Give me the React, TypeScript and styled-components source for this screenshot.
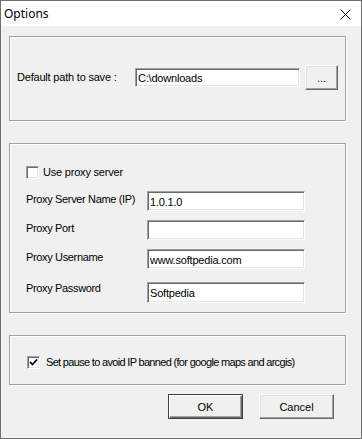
import React from "react";
import styled, { createGlobalStyle } from "styled-components";

const Global = createGlobalStyle`
  html, body { margin: 0; padding: 0; background: #f0f0f0; }
  * { box-sizing: border-box; }
`;

const Window = styled.div`
  width: 362px;
  height: 439px;
  border: 1px solid #707070;
  background: #f0f0f0;
  display: flex;
  flex-direction: column;
  font-family: "Liberation Sans", Arial, sans-serif;
  font-size: 11px;
  color: #000;
`;

const TitleBar = styled.div`
  height: 25px;
  background: #fff;
  display: flex;
  align-items: center;
  justify-content: space-between;
  padding: 0 10px 0 3px;
  flex-shrink: 0;
`;

const Title = styled.span`
  font-family: "Noto Sans", "Open Sans", sans-serif;
  font-size: 12px;
  color: #000;
  margin-top: -1px;
`;

const Close = styled.svg`
  width: 11px;
  height: 11px;
  margin-top: 2px;
`;

const Body = styled.div`
  flex: 1;
  display: flex;
  flex-direction: column;
  padding: 0 15px 0 8px;
`;

const Group = styled.div<{ $h: number; $top: number }>`
  height: ${(p) => p.$h}px;
  margin-top: ${(p) => p.$top}px;
  border: 1px solid #a0a0a0;
  box-shadow: inset 1px 1px 0 #fff, 1px 1px 0 #fff;
`;

const PathRow = styled.div`
  height: 100%;
  display: flex;
  align-items: center;
  padding: 0 0 2px 7px;
`;

const Label = styled.span<{ $w?: number; $pt?: number; $ls?: number }>`
  display: block;
  width: ${(p) => (p.$w ? `${p.$w}px` : "auto")};
  flex-shrink: 0;
  line-height: 13px;
  padding-top: ${(p) => p.$pt ?? 0}px;
  white-space: nowrap;
  letter-spacing: ${(p) => p.$ls ?? -0.2}px;
`;

const TextBox = styled.input<{ $w: number; $h: number }>`
  width: ${(p) => p.$w}px;
  height: ${(p) => p.$h}px;
  margin: 0;
  padding: 1px 2px 0;
  background: #fff;
  border: 1px solid;
  border-color: #a0a0a0 #fff #fff #a0a0a0;
  box-shadow: inset 1px 1px 0 #696969, inset -1px -1px 0 #e3e3e3;
  font-family: "Liberation Sans", Arial, sans-serif;
  font-size: 11px;
  letter-spacing: -0.2px;
  color: #000;
  outline: none;
`;

const Button = styled.button<{ $w: number; $h: number; $default?: boolean }>`
  width: ${(p) => p.$w}px;
  height: ${(p) => p.$h}px;
  margin: 0;
  padding: 0;
  background: #f0f0f0;
  border: 1px solid;
  border-color: ${(p) =>
    p.$default ? "#404040" : "#fff #696969 #696969 #fff"};
  box-shadow: ${(p) =>
    p.$default
      ? "inset 1px 1px 0 #fff, inset -1px -1px 0 #696969, inset -2px -2px 0 #a0a0a0"
      : "inset -1px -1px 0 #a0a0a0, inset 1px 1px 0 #e3e3e3"};
  font-family: "Liberation Sans", Arial, sans-serif;
  font-size: 11px;
  color: #000;
  display: flex;
  align-items: center;
  justify-content: center;
`;

const ProxyBody = styled.div`
  display: flex;
  flex-direction: column;
  padding: 22px 0 0 16px;
`;

const CheckRow = styled.div<{ $gap: number }>`
  display: flex;
  align-items: center;
  gap: ${(p) => p.$gap}px;
  height: 13px;
`;

const Box = styled.span`
  width: 13px;
  height: 13px;
  flex-shrink: 0;
  background: #fff;
  border: 1px solid;
  border-color: #a0a0a0 #fff #fff #a0a0a0;
  box-shadow: inset 1px 1px 0 #696969, inset -1px -1px 0 #e3e3e3;
  display: flex;
  align-items: center;
  justify-content: center;
`;

const Fields = styled.div`
  display: flex;
  flex-direction: column;
  gap: 9px;
  margin-top: 12px;
`;

const FieldRow = styled.div<{ $mt?: number }>`
  display: flex;
  align-items: flex-start;
  margin-top: ${(p) => p.$mt ?? 0}px;
`;

const PauseBody = styled.div`
  height: 100%;
  display: flex;
  align-items: center;
  padding: 5px 0 0 17px;
`;

const Buttons = styled.div`
  display: flex;
  justify-content: flex-end;
  gap: 16px;
  margin-top: 9px;
  padding-right: 12px;
`;

const Check = ({ checked }: { checked?: boolean }) => (
  <Box>
    {checked && (
      <svg width="9" height="9" viewBox="0 0 9 9">
        <path d="M1 4 L3.5 6.5 L8 1.5" stroke="#000" strokeWidth="1.8" fill="none" />
      </svg>
    )}
  </Box>
);

const fields: { label: string; value: string; mt?: number; pt?: number; h: number }[] = [
  { label: "Proxy Server Name (IP)", value: "1.0.1.0", pt: 2, h: 20 },
  { label: "Proxy Port", value: "", pt: 2, h: 20 },
  { label: "Proxy Username", value: "www.softpedia.com", pt: 2, h: 20 },
  { label: "Proxy Password", value: "Softpedia", mt: 4, pt: 0, h: 21 },
];

export default function App() {
  return (
    <>
      <Global />
      <Window>
        <TitleBar>
          <Title>Options</Title>
          <Close viewBox="0 0 11 11">
            <path d="M0.5 0.5 L10.5 10.5 M10.5 0.5 L0.5 10.5" stroke="#000" strokeWidth="1" />
          </Close>
        </TitleBar>
        <Body>
          <Group $h={85} $top={10}>
            <PathRow>
              <Label $w={118}>Default path to save :</Label>
              <TextBox $w={165} $h={19} readOnly defaultValue="C:\downloads" />
              <Button $w={33} $h={25} style={{ marginLeft: 5 }}>...</Button>
            </PathRow>
          </Group>
          <Group $h={170} $top={22}>
            <ProxyBody>
              <CheckRow $gap={4}>
                <Check />
                <Label>Use proxy server</Label>
              </CheckRow>
              <Fields>
                {fields.map((f) => (
                  <FieldRow key={f.label} $mt={f.mt}>
                    <Label $w={121} $pt={f.pt} $ls={-0.35}>{f.label}</Label>
                    <TextBox $w={158} $h={f.h} readOnly defaultValue={f.value} />
                  </FieldRow>
                ))}
              </Fields>
            </ProxyBody>
          </Group>
          <Group $h={50} $top={22}>
            <PauseBody>
              <CheckRow $gap={6}>
                <Check checked />
                <Label $ls={-0.68}>Set pause to avoid IP banned (for google maps and arcgis)</Label>
              </CheckRow>
            </PauseBody>
          </Group>
          <Buttons>
            <Button $w={75} $h={25} $default>OK</Button>
            <Button $w={75} $h={25}>Cancel</Button>
          </Buttons>
        </Body>
      </Window>
    </>
  );
}
